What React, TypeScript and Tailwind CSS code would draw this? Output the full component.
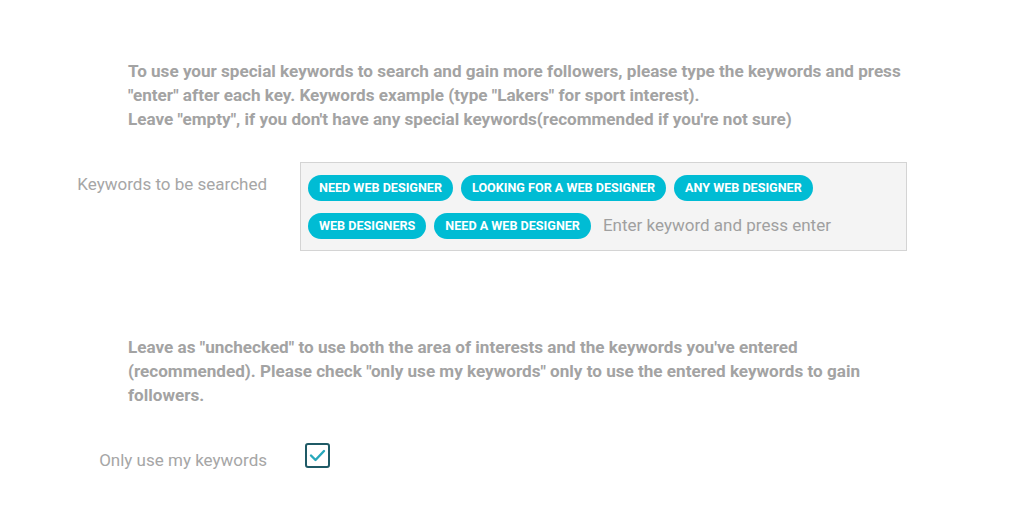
const keywords = [
  "NEED WEB DESIGNER",
  "LOOKING FOR A WEB DESIGNER",
  "ANY WEB DESIGNER",
  "WEB DESIGNERS",
  "NEED A WEB DESIGNER",
];

export default function App() {
  return (
    <div className="min-h-[507px] w-[1024px] bg-white pt-[59px] font-['Roboto',sans-serif]">
      <p className="ml-[128px] w-[800px] text-[17.1px] font-bold leading-[24px] text-[#a3a3a3]">
        To use your special keywords to search and gain more followers, please type the keywords and press
        "enter" after each key. Keywords example (type "Lakers" for sport interest).
        <br />
        Leave "empty", if you don't have any special keywords(recommended if you're not sure)
      </p>

      <div className="mt-[31px] flex items-start">
        <div className="mt-[10px] w-[267px] text-right text-[17px] leading-[24px] text-[#a6a6a6]">
          Keywords to be searched
        </div>
        <div className="ml-[33px] flex h-[89px] w-[607px] flex-wrap content-start items-center gap-x-[8px] gap-y-[12px] border border-[#d4d4d4] bg-[#f4f4f4] px-[7px] pt-[12px]">
          {keywords.map((k) => (
            <span
              key={k}
              className="flex h-[26px] items-center rounded-full bg-[#00bcd4] px-[11px] text-[12.6px] font-bold text-white"
            >
              {k}
            </span>
          ))}
          <span className="ml-[4px] text-[17px] text-[#a0a0a0]">Enter keyword and press enter</span>
        </div>
      </div>

      <p className="ml-[128px] mt-[84px] w-[770px] text-[17.1px] font-bold leading-[24px] text-[#a3a3a3]">
        Leave as "unchecked" to use both the area of interests and the keywords you've entered
        (recommended). Please check "only use my keywords" only to use the entered keywords to gain
        followers.
      </p>

      <div className="mt-[36px] flex items-start">
        <div className="mt-[5px] w-[267px] text-right text-[17px] leading-[24px] text-[#a6a6a6]">
          Only use my keywords
        </div>
        <div className="ml-[38px] flex h-[25px] w-[25px] items-center justify-center rounded-[3px] border-2 border-[#1f5a66] bg-white">
          <svg width="17" height="13" viewBox="0 0 17 13" fill="none">
            <path d="M2 6.5 L6.5 11 L15 2" stroke="#27a8bb" strokeWidth="2.4" strokeLinecap="round" strokeLinejoin="round" />
          </svg>
        </div>
      </div>
    </div>
  );
}
